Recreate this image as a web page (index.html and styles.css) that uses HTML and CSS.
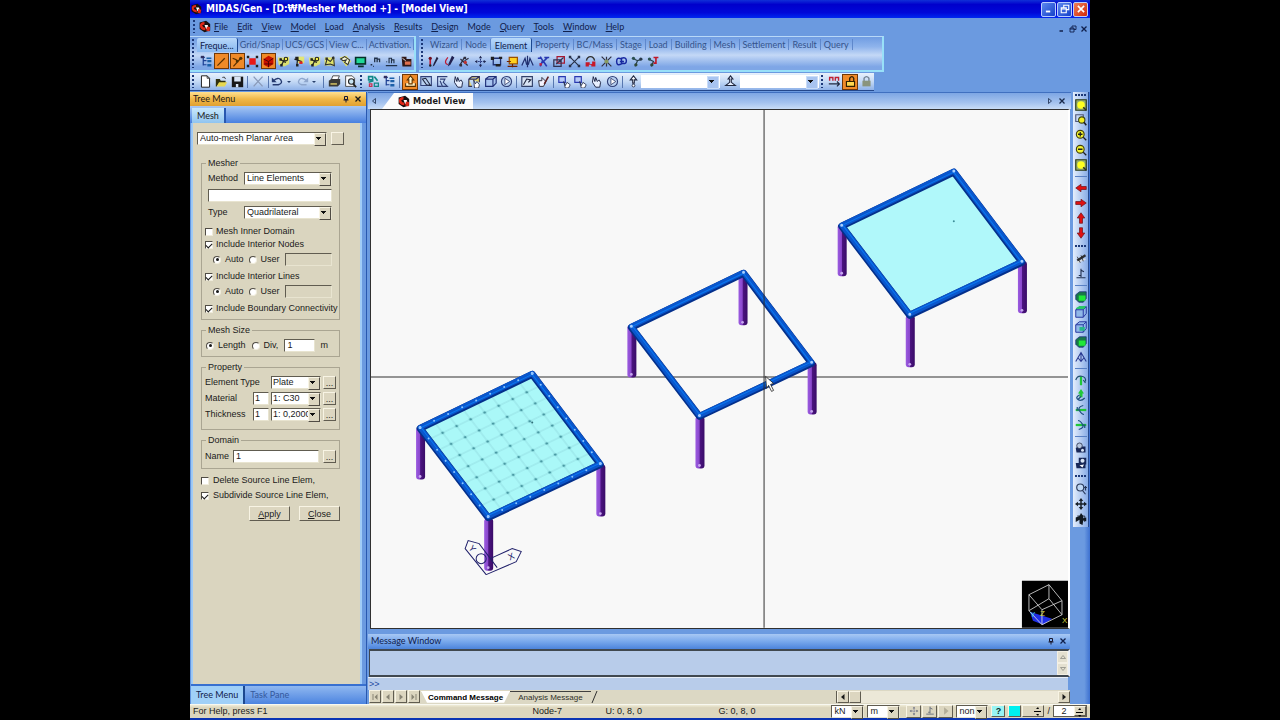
FILE: index.html
```html
<!DOCTYPE html>
<html lang="en">
<head>
<meta charset="utf-8">
<title>MIDAS/Gen - Model View</title>
<link rel="stylesheet" href="styles.css">
</head>
<body>
<svg class="sprite" aria-hidden="true">
  <defs>
    <symbol id="logo" viewBox="0 0 16 16"><path fill="#181010" d="M2 3 10 1l5 4v8l-7 2-6-4z"/><path fill="none" stroke="#e02818" stroke-width="3" d="M8 4Q3 4 4 8q1 3 5 3"/><path fill="#fff" d="M8 6h4l1 4-3 1z"/><path fill="#e02818" d="m11 8 4 1-1 5-4-1z"/></symbol>
    <symbol id="tree" viewBox="0 0 16 16"><path fill="none" stroke="#1c3f94" stroke-width="1.5" d="M1 3h5M4 3v10M4 7h4M4 12h4"/><path fill="#1c60a8" d="M8 3h6v2H8zM9 6h5v3H9zM9 11h5v3H9z"/><path fill="#303060" d="M1 1h4v3H1z"/></symbol>
    <symbol id="line" viewBox="0 0 16 16"><path stroke="#5a3000" stroke-width="1.5" d="m3 13 9-9"/></symbol>
    <symbol id="line2" viewBox="0 0 16 16"><path stroke="#5a3000" stroke-width="1.5" d="m3 14 9-10M2 4l5 2"/><circle cx="12" cy="4" r="2" fill="#503000"/><path fill="#503000" d="M6 6h3v3H6z"/></symbol>
    <symbol id="redbox" viewBox="0 0 16 16"><path fill="#e81818" d="M4 4h8v8H4z"/><path fill="#202020" d="M1 1h3v3H1zM12 1h3v3h-3zM1 12h3v3H1zM12 12h3v3h-3z"/></symbol>
    <symbol id="redcube" viewBox="0 0 16 16"><path fill="#c81000" d="m2 5 6-4 6 3v7l-6 4-6-3z"/><path stroke="#400" fill="none" d="m2 5 6 3 6-4M8 8v7M3 11h10"/></symbol>
    <symbol id="node" viewBox="0 0 16 16"><path fill="#f3ee48" d="M1 3h7l7-1v9l-6 3-7-2z" opacity=".75"/><path stroke="#202020" stroke-width="1.5" fill="none" d="m4 5 4 3 3 1M8 8l-3 5M8 8l2-4"/><circle cx="11" cy="5" r="2.2" fill="#f3ee48" stroke="#202020" stroke-width="1.3"/><path fill="#202020" d="M3 4h3v3H3zM4 11h3v3H4z"/></symbol>
    <symbol id="node2" viewBox="0 0 16 16"><path fill="#f3ee48" d="M7 2h8v8H7z" opacity=".75"/><path stroke="#202020" stroke-width="1.5" fill="none" d="m3 5 9 3M7 3l-1 10"/><path fill="#e02020" d="M9 8h4v3H9z"/><path fill="#202020" d="M4 2h4v4H4zM5 11h3v3H5z"/></symbol>
    <symbol id="poly" viewBox="0 0 16 16"><path fill="#f3ee48" d="M2 3h12v10H2z" opacity=".8"/><path stroke="#303030" stroke-width="1.3" fill="none" d="m3 12 2-7 4 3 4-5 1 10-5-2z"/><path fill="#303030" d="M3 3h3v3H3zM11 2h3v3h-3z"/></symbol>
    <symbol id="hand" viewBox="0 0 16 16"><path fill="#f3ee48" d="M1 3 9 1l6 7-6 6z" opacity=".85"/><path stroke="#303030" fill="#f5f5d0" stroke-width="1.3" d="m2 5 5-3 6 4-2 6-4-3 2-3-4 1z"/></symbol>
    <symbol id="screen" viewBox="0 0 16 16"><path fill="#063028" d="M1 2h14v10H1zM5 13h7v2H5z"/><path fill="#20d898" d="M3 4h10v6H3z"/></symbol>
    <symbol id="num" viewBox="0 0 16 16"><path fill="none" stroke="#203048" stroke-width="1.6" d="M7 9V4h3v5M10 5h3v4M2 12h2M5 14h1"/></symbol>
    <symbol id="num2" viewBox="0 0 16 16"><path fill="none" stroke="#203048" stroke-width="1.4" d="M5 10V4h3v6M8 6h3v4M1 13h14M2 8v1"/></symbol>
    <symbol id="case" viewBox="0 0 16 16"><path fill="#301818" d="M2 2h6v3h6v9H3z"/><path fill="#e07050" d="M6 8h7v4H6z"/><path stroke="#fff" d="m3 4 4 3"/></symbol>
    <symbol id="pen" viewBox="0 0 16 16"><path stroke="#c01830" stroke-width="2" d="M4 3v9"/><path fill="#202040" d="M12 2 14 4 9 13l-2 1 1-3z"/><circle cx="4" cy="4" r="2" fill="#701020"/><circle cx="4" cy="13" r="1.5" fill="#202020"/></symbol>
    <symbol id="pencurve" viewBox="0 0 16 16"><path fill="none" stroke="#c01830" stroke-width="1.5" d="M6 3q-6 7 0 9"/><path fill="#202050" d="m11 1 3 2-5 9-3 2 1-4z"/></symbol>
    <symbol id="pens" viewBox="0 0 16 16"><path stroke="#303040" stroke-width="1.5" fill="none" d="m2 13 6-10M3 5l9 8M8 7l5-3"/><circle cx="9" cy="9" r="2" fill="#c03030"/><path fill="#303040" d="M2 11h3v3H2zM7 2h3v3H7z"/></symbol>
    <symbol id="mover" viewBox="0 0 16 16"><path stroke="#2a3a80" stroke-width="1.3" stroke-dasharray="2 1" fill="none" d="M8 2v12M2 8h12"/><path fill="#202850" d="m8 1 2 3H6zM8 15l2-3H6zM1 8l3-2v4zM15 8l-3-2v4z"/></symbol>
    <symbol id="copyel" viewBox="0 0 16 16"><path fill="none" stroke="#203070" stroke-width="1.6" d="M3 4h10M4 4v8h9V4"/><path fill="#202020" d="M1 2h4v4H1zM11 2h4v3h-4zM7 11h6v3H7z"/></symbol>
    <symbol id="yellowrect" viewBox="0 0 16 16"><path fill="#ffd020" stroke="#9a5000" stroke-width="1.5" d="M4 3h10v8H4z"/><path stroke="#702000" stroke-width="1.5" d="M1 8h5M8 11v4M2 14h12"/></symbol>
    <symbol id="mirror" viewBox="0 0 16 16"><path fill="none" stroke="#203070" stroke-width="1.5" d="m1 13 4-9 2 8M15 13l-4-9-2 8M8 1v14"/></symbol>
    <symbol id="divide" viewBox="0 0 16 16"><path fill="none" stroke="#2838b0" stroke-width="2" d="M1 4h4M9 3h6M4 2l3 5-3 7M13 3l-5 5 4 6"/><path fill="#c02040" d="M3 10h3v3H3z"/></symbol>
    <symbol id="merge" viewBox="0 0 16 16"><path fill="none" stroke="#a81830" stroke-width="1.5" d="M5 2h9v8H5z"/><path fill="none" stroke="#303050" stroke-width="1.5" d="M1 6h9v8H1zM4 11l9-8"/></symbol>
    <symbol id="cross" viewBox="0 0 16 16"><path stroke="#283048" stroke-width="1.4" d="m2 2 12 12M14 2 2 14"/><path fill="#283048" d="M1 1h3v3H1zM12 1h3v3h-3zM1 12h3v3H1zM12 12h3v3h-3z"/></symbol>
    <symbol id="rotate" viewBox="0 0 16 16"><path fill="none" stroke="#303030" stroke-width="1.7" d="M3 7q1-5 5-5t5 5"/><path fill="#c81828" d="M2 9h5v2h3V8h4v6H9v-2H6v2H2z"/></symbol>
    <symbol id="burst" viewBox="0 0 16 16"><path stroke="#303040" stroke-width="1.5" d="m2 2 12 12M14 2 2 14M8 2v12"/><circle cx="8" cy="8" r="2.5" fill="#889a60"/></symbol>
    <symbol id="loops" viewBox="0 0 16 16"><path fill="none" stroke="#1828a0" stroke-width="1.8" d="M8 5Q2 2 2 8t6 3V4q6-2 6 3t-6 3M6 8h5"/></symbol>
    <symbol id="nodes3" viewBox="0 0 16 16"><path fill="none" stroke="#28404a" stroke-width="1.5" d="m2 4 6 3 6-2M8 7l-3 7"/><circle cx="3" cy="4" r="2" fill="#2a5050"/><circle cx="12" cy="5" r="2" fill="#28384a"/><circle cx="6" cy="12" r="2" fill="#304838"/></symbol>
    <symbol id="nodes4" viewBox="0 0 16 16"><path fill="none" stroke="#28404a" stroke-width="1.5" d="m2 5 6 3-3 6"/><path fill="none" stroke="#c01828" stroke-width="2" d="M8 3h6M11 3v7H8"/><circle cx="3" cy="5" r="2" fill="#2a5050"/><circle cx="6" cy="12" r="2" fill="#304838"/></symbol>
    <symbol id="new" viewBox="0 0 16 16"><path fill="#fff" stroke="#202020" stroke-width="1.2" d="M3 1h7l3 3v11H3z"/><path fill="none" stroke="#202020" d="M10 1v3h3"/></symbol>
    <symbol id="open" viewBox="0 0 16 16"><path fill="#303010" d="M1 5h5l1 2h6v3H5l-3 4H1z"/><path fill="#e8d850" d="M5 9h10l-3 5H2z"/><path fill="none" stroke="#202020" d="M9 3q3-2 4 2"/></symbol>
    <symbol id="save" viewBox="0 0 16 16"><path fill="#181818" d="M1 2h14v13H1z"/><path fill="#d8e4f4" d="M4 2h8v6H4zM6 11h3v4H6z"/></symbol>
    <symbol id="cut" viewBox="0 0 16 16"><path stroke="#8a9ab8" stroke-width="1.6" d="m2 2 11 12M13 2 2 14"/></symbol>
    <symbol id="undo" viewBox="0 0 16 16"><path fill="none" stroke="#253a70" stroke-width="1.7" d="M3 7q6-5 9-1t-3 6H2"/><path fill="#253a70" d="M1 3v6h6z"/></symbol>
    <symbol id="redo" viewBox="0 0 16 16"><path fill="none" stroke="#8ea6cc" stroke-width="1.7" d="M13 7Q7 2 4 6t3 6h6"/><path fill="#8ea6cc" d="M15 3v6H9z"/></symbol>
    <symbol id="print" viewBox="0 0 16 16"><path fill="#fff" stroke="#303030" d="m4 6 2-5h8l-2 5z"/><path fill="#3a3a38" d="m1 7 3-2h11v6l-3 3H1z"/><path fill="#c8b860" d="M3 10h8v2H3z"/></symbol>
    <symbol id="preview" viewBox="0 0 16 16"><path fill="#fff" stroke="#303030" d="M2 1h8l3 3v10H2z"/><circle cx="9" cy="8" r="3.4" fill="#c8e4f4" stroke="#202020" stroke-width="1.4"/><path stroke="#202020" stroke-width="2" d="m11 11 4 4"/></symbol>
    <symbol id="works" viewBox="0 0 16 16"><path fill="none" stroke="#108888" stroke-width="2" d="M2 2h5v4H2zM9 2l4 5M2 9l6-2"/><path fill="none" stroke="#c83050" stroke-width="1.5" d="M3 11h3v3H3z"/><path fill="none" stroke="#108888" stroke-width="1.5" d="M9 10h5v4H9z"/></symbol>
    <symbol id="sel" viewBox="0 0 16 16"><path fill="#fff4c8" stroke="#583000" stroke-width="1.3" d="m8 1 4 5h-2v5H6V6H4zM2 10v4h12v-4"/></symbol>
    <symbol id="winsel" viewBox="0 0 16 16"><path fill="#b8d0f0" stroke="#304078" stroke-width="1.3" d="M1 2h13v11H1z"/><path fill="none" stroke="#202840" stroke-width="1.3" d="m3 5 4-1 6 9-5-1z"/></symbol>
    <symbol id="polysel" viewBox="0 0 16 16"><path fill="none" stroke="#304078" stroke-width="1.4" d="M14 2H2v12h5M5 5h6l-2 4 5 5H8L5 7"/></symbol>
    <symbol id="point" viewBox="0 0 16 16"><path fill="#e8f0ff" stroke="#202848" stroke-width="1.2" d="m4 2 2 6 1-5 2 5 2-2 2 3-1 6H7L3 9z"/></symbol>
    <symbol id="cube" viewBox="0 0 16 16"><path fill="#a8c4f0" stroke="#203078" stroke-width="1.4" d="m2 5 4-3h9v8l-4 4H2zM2 5h9l4-3M11 5v9"/></symbol>
    <symbol id="cubehand" viewBox="0 0 16 16"><path fill="#e8d870" stroke="#303058" stroke-width="1.4" d="m1 5 4-3h9v7M1 5h9l4-3M1 5v9h4"/><path fill="#fff" stroke="#202848" d="m7 6 2 5 2-3 3 4-1 4H8z"/></symbol>
    <symbol id="circ" viewBox="0 0 16 16"><circle cx="8" cy="8" r="6.2" fill="#b8d0f0" stroke="#304078" stroke-width="1.4"/><path fill="#fff" stroke="#303a68" d="M6 4v8l6-4z"/></symbol>
    <symbol id="frame" viewBox="0 0 16 16"><path fill="#d8e4f4" stroke="#304068" stroke-width="1.4" d="M1 2h13v12H1z"/><path fill="none" stroke="#202840" stroke-width="1.4" d="m3 12 4-7 5 1-3 3"/></symbol>
    <symbol id="handpen" viewBox="0 0 16 16"><path fill="#f4f4ff" stroke="#303040" stroke-width="1.2" d="M2 7h4V3l5 5-3 6H3z"/><path stroke="#602020" stroke-width="2" d="m9 11 5-9"/></symbol>
    <symbol id="boxhand" viewBox="0 0 16 16"><path fill="#b8ccf8" stroke="#2838b0" stroke-width="1.4" d="M1 2h8v7H1z"/><path fill="#fff" stroke="#202848" d="m7 8 2 5 2-4 4 3-2 4H9z"/></symbol>
    <symbol id="up" viewBox="0 0 16 16"><path fill="#fff" stroke="#202840" stroke-width="1.3" d="m8 1 4 5H9v4H7V6H4z"/><circle cx="8" cy="13" r="1.7" fill="#fff" stroke="#202840"/></symbol>
    <symbol id="upset" viewBox="0 0 16 16"><path fill="#e8f0ff" stroke="#202840" stroke-width="1.3" d="m8 1 3 4H9v4l5 4H2l5-4V5H5z"/></symbol>
    <symbol id="heart" viewBox="0 0 16 16"><path fill="none" stroke="#c02030" stroke-width="1.7" d="M2 7V3h4v4M9 7V3h4v4"/><path fill="none" stroke="#202840" stroke-width="1.5" d="M1 11h12M11 8l3 3-3 3"/></symbol>
    <symbol id="unlock" viewBox="0 0 16 16"><path fill="none" stroke="#302000" stroke-width="1.6" d="M7 8V4q3-4 5 0v4"/><path fill="#ffd850" stroke="#302000" stroke-width="1.4" d="M3 8h10v6H3z"/></symbol>
    <symbol id="lock" viewBox="0 0 16 16"><path fill="none" stroke="#708090" stroke-width="1.6" d="M5 8V4q3-4 6 0v4"/><path fill="#8a947c" d="M3 7h10v7H3z"/></symbol>
    <symbol id="zfit" viewBox="0 0 16 16"><path fill="#98b070" stroke="#283818" stroke-width="1.5" d="M1 1h14v14H1z"/><circle cx="8" cy="8" r="5" fill="#ffff20"/><path stroke="#303020" stroke-width="2" d="m11 11 4 4"/></symbol>
    <symbol id="zwin" viewBox="0 0 16 16"><path fill="none" stroke="#505878" stroke-width="1.5" d="M1 1h10v9H1z"/><circle cx="9" cy="8" r="4.2" fill="#f4f020" stroke="#404818" stroke-width="1.5"/><path stroke="#202020" stroke-width="2" d="m12 11 3 4"/></symbol>
    <symbol id="zin" viewBox="0 0 16 16"><circle cx="7" cy="7" r="5.2" fill="#f4f430" stroke="#404010" stroke-width="1.5"/><path stroke="#202020" stroke-width="1.7" d="M4 7h6M7 4v6M11 11l4 4"/></symbol>
    <symbol id="zout" viewBox="0 0 16 16"><circle cx="7" cy="7" r="5.2" fill="#f4f430" stroke="#404010" stroke-width="1.5"/><path stroke="#202020" stroke-width="1.7" d="M4 7h6M11 11l4 4"/></symbol>
    <symbol id="arrow" viewBox="0 0 16 16"><path fill="#e01010" stroke="#701820" d="m1 8 7-5v3h7v4H8v3z"/></symbol>
    <symbol id="brush" viewBox="0 0 16 16"><path stroke="#303030" stroke-width="3" d="M3 10 14 3"/><path stroke="#d8dce0" stroke-width="2" d="m2 13 12-5"/><path stroke="#202020" d="m3 5 4 8M8 3l3 8"/></symbol>
    <symbol id="perp" viewBox="0 0 16 16"><path fill="none" stroke="#203050" stroke-width="1.5" d="M8 1v11M2 13h12M8 3l4 2M5 10h3"/></symbol>
    <symbol id="gcube" viewBox="0 0 16 16"><path fill="#187848" stroke="#203080" d="m1 5 5-4h9v9l-4 5H5L1 11z"/><path fill="#20e838" d="M5 6h9v7H5z"/></symbol>
    <symbol id="gcube2" viewBox="0 0 16 16"><path fill="#90b8e8" stroke="#2838a0" stroke-width="1.3" d="m1 5 5-4h9v9l-4 5H1zM1 5h10v10M11 5l4-4"/><path fill="#28c868" d="M1 3 6 0h9l-3 4H2z"/></symbol>
    <symbol id="gcube3" viewBox="0 0 16 16"><path fill="#90b8e8" stroke="#2838a0" stroke-width="1.3" d="m1 5 5-4h9v9l-4 5H1zM1 5h10v10M11 5l4-4"/><path fill="#28b888" d="M6 8h7v5H6z"/></symbol>
    <symbol id="axes" viewBox="0 0 16 16"><path fill="none" stroke="#283890" stroke-width="1.4" d="m1 14 7-12 7 12M4 9l4 5 4-5M8 2v12"/></symbol>
    <symbol id="rot1" viewBox="0 0 16 16"><path stroke="#20c838" stroke-width="3" d="M8 3v12"/><path fill="none" stroke="#205070" stroke-width="1.6" d="M1 8q2-6 8-5t5 7M11 8l3 4"/></symbol>
    <symbol id="rot2" viewBox="0 0 16 16"><path fill="#20c838" d="m8 0 4 6h-2v5H6V6H4z"/><path fill="none" stroke="#205080" stroke-width="1.6" d="M6 8q-6 3-2 6t9-2M8 10l-4 4"/></symbol>
    <symbol id="rot3" viewBox="0 0 16 16"><path stroke="#20c838" stroke-width="3" d="M1 8h14"/><path fill="none" stroke="#205080" stroke-width="1.6" d="M11 2Q3 4 6 9t6 5M3 4v4h4"/></symbol>
    <symbol id="cam" viewBox="0 0 16 16"><path fill="#182858" d="M1 8 4 6h10v8H2z"/><circle cx="6" cy="5" r="3.7" fill="#b8c8e0" stroke="#202840"/><circle cx="10" cy="11" r="2" fill="#d8e4f4"/></symbol>
    <symbol id="cam2" viewBox="0 0 16 16"><path fill="#182858" d="M1 8h13v7H2zM5 1h10v9H5z"/><circle cx="10" cy="5" r="2.7" fill="#d8e4f4"/><path fill="#fff" d="m6 11 6-1-2 4z"/></symbol>
    <symbol id="mag" viewBox="0 0 16 16"><circle cx="7" cy="6" r="4.7" fill="#c0d8f4" stroke="#283858" stroke-width="1.5"/><path stroke="#283858" stroke-width="1.6" d="m10 10 4 5M14 4v6M12 6h4"/></symbol>
    <symbol id="pan" viewBox="0 0 16 16"><path stroke="#182028" stroke-width="2" d="M8 2v12M2 8h12"/><path fill="#182028" d="m8 0 3 4H5zM8 16l3-4H5zM0 8l4-3v6zM16 8l-4-3v6z"/></symbol>
    <symbol id="orbit" viewBox="0 0 16 16"><path fill="#101820" d="m8 0 3 4v3l4-1v5l-4-1-1 6-4-2V9L1 12V6l5-2z"/><path fill="none" stroke="#101820" d="M3 4h10v8"/></symbol>
    <symbol id="pin" viewBox="0 0 16 16"><path fill="none" stroke="#181830" stroke-width="2" d="M5 3h6v6H5zM3 10h10M8 10v5"/></symbol>
    <symbol id="x" viewBox="0 0 16 16"><path stroke="currentColor" stroke-width="2.6" d="m3 3 10 10M13 3 3 13"/></symbol>
    <symbol id="min" viewBox="0 0 16 16"><path stroke="currentColor" stroke-width="3" d="M3 12h7"/></symbol>
    <symbol id="restore" viewBox="0 0 16 16"><path fill="none" stroke="currentColor" stroke-width="1.8" d="M6 6V2h8v7h-4M2 6h8v8H2zM2 8h8"/></symbol>
    <symbol id="tri" viewBox="0 0 16 16"><path fill="currentColor" d="M5 2v12l7-6z"/></symbol>
    <symbol id="triopen" viewBox="0 0 16 16"><path fill="none" stroke="currentColor" stroke-width="1.6" d="M5 3v10l6-5z"/></symbol>
    <symbol id="triend" viewBox="0 0 16 16"><path fill="currentColor" d="M3 2v12l6-6zM11 2h2v12h-2z"/></symbol>
    <linearGradient id="purple"><stop offset="0" stop-color="#9b5be0"/><stop offset=".42" stop-color="#8a48cc"/><stop offset=".5" stop-color="#4b1480"/><stop offset="1" stop-color="#3a0c68"/></linearGradient>
    <pattern id="mesh" width="10" height="10" patternUnits="userSpaceOnUse" patternTransform="matrix(1.4 -.675 .85 1.11 421 428)"><path fill="none" stroke="#86d0d6" stroke-width=".4" d="M0 0h10M0 0v10M10 0v10M0 10h10"/><path fill="#4a9aa4" d="M0 0h.8v.8H0zM9.200 0h.8v.8h-.8zM0 9.200h.8v.8H0zM9.200 9.200h.8v.8h-.8z"/></pattern>
    <rect id="leg" width="9" height="52" rx="3" fill="url(#purple)"/>
    <g id="beams" fill="none" stroke-linejoin="round">
      <path stroke="#04308c" stroke-width="7" d="m421 428 112-54 68 90-112 53z"/>
      <path stroke="#0a56cc" stroke-width="5" d="m421 427 112-54 68 90-112 53z"/>
      <path stroke="#0a78f0" stroke-width="1" d="m422 427 111-53 67 89-111 52z"/>
      <path stroke="#a8d0ff" stroke-width="3" stroke-linecap="round" d="M421 427h0M533 373h0M601 463h0M489 516h0"/>
    </g>
    <g id="legs"><use href="#leg" x="417" y="427"/><use href="#leg" x="485" y="518"/><use href="#leg" x="597" y="464"/><g fill="#c8a8f0"><circle cx="421" cy="476" r="1.4"/><circle cx="489" cy="567" r="1.4"/><circle cx="601" cy="513" r="1.4"/></g></g>
  </defs>
</svg>

<div class="app">
  <header class="title">
    <svg class="ic"><use href="#logo"/></svg>
    <h1>MIDAS/Gen - [D:₩Mesher Method +] - [Model View]</h1>
    <div class="winbtns">
      <button aria-label="Minimize"><svg class="ic"><use href="#min"/></svg></button>
      <button aria-label="Restore"><svg class="ic"><use href="#restore"/></svg></button>
      <button class="close" aria-label="Close window"><svg class="ic"><use href="#x"/></svg></button>
    </div>
  </header>

  <nav class="menu">
    <i class="grip"></i><svg class="ic"><use href="#logo"/></svg>
    <button><u>F</u>ile</button><button><u>E</u>dit</button><button><u>V</u>iew</button><button><u>M</u>odel</button><button><u>L</u>oad</button><button><u>A</u>nalysis</button><button><u>R</u>esults</button><button><u>D</u>esign</button><button>M<u>o</u>de</button><button><u>Q</u>uery</button><button><u>T</u>ools</button><button><u>W</u>indow</button><button><u>H</u>elp</button>
    <div class="mdi">
      <button aria-label="Minimize view"><svg><use href="#min"/></svg></button>
      <button aria-label="Restore view"><svg><use href="#restore"/></svg></button>
      <button aria-label="Close view"><svg><use href="#x"/></svg></button>
    </div>
  </nav>

  <div class="ribbons">
    <section class="ribbon ribbon-a">
      <i class="grip"></i>
      <div class="rtabs"><button class="on">Freque...</button><button>Grid/Snap</button><button>UCS/GCS</button><button>View C...</button><button>Activation.</button></div>
      <div class="rtools">
        <button class="t" aria-label="Works tree"><svg class="ic"><use href="#tree"/></svg></button>
        <button class="t hot" aria-label="Line"><svg class="ic"><use href="#line"/></svg></button>
        <button class="t hot" aria-label="Line nodes"><svg class="ic"><use href="#line2"/></svg></button>
        <button class="t" aria-label="Shrink"><svg class="ic"><use href="#redbox"/></svg></button>
        <button class="t hot" aria-label="Hidden"><svg class="ic"><use href="#redcube"/></svg></button>
        <button class="t" aria-label="Node snap"><svg class="ic"><use href="#node"/></svg></button>
        <button class="t" aria-label="Element snap"><svg class="ic"><use href="#node2"/></svg></button>
        <button class="t" aria-label="Activate"><svg class="ic"><use href="#node"/></svg></button>
        <button class="t" aria-label="Inverse"><svg class="ic"><use href="#poly"/></svg></button>
        <button class="t" aria-label="Activate all"><svg class="ic"><use href="#hand"/></svg></button>
        <button class="t" aria-label="Display"><svg class="ic"><use href="#screen"/></svg></button>
        <button class="t" aria-label="Node number"><svg class="ic"><use href="#num"/></svg></button>
        <button class="t" aria-label="Element number"><svg class="ic"><use href="#num2"/></svg></button>
        <button class="t" aria-label="Display option"><svg class="ic"><use href="#case"/></svg></button>
      </div>
    </section>
    <section class="ribbon ribbon-b">
      <i class="grip"></i>
      <div class="rtabs"><button>Wizard</button><button>Node</button><button class="on">Element</button><button>Property</button><button>BC/Mass</button><button>Stage</button><button>Load</button><button>Building</button><button>Mesh</button><button>Settlement</button><button>Result</button><button>Query</button></div>
      <div class="rtools">
        <button class="t" aria-label="Create"><svg class="ic"><use href="#pen"/></svg></button>
        <button class="t" aria-label="Create on curve"><svg class="ic"><use href="#pencurve"/></svg></button>
        <button class="t" aria-label="Delete"><svg class="ic"><use href="#pens"/></svg></button>
        <button class="t" aria-label="Translate"><svg class="ic"><use href="#mover"/></svg></button>
        <button class="t" aria-label="Extrude"><svg class="ic"><use href="#copyel"/></svg></button>
        <button class="t" aria-label="Rotate"><svg class="ic"><use href="#yellowrect"/></svg></button>
        <button class="t" aria-label="Mirror"><svg class="ic"><use href="#mirror"/></svg></button>
        <button class="t" aria-label="Divide"><svg class="ic"><use href="#divide"/></svg></button>
        <button class="t" aria-label="Merge"><svg class="ic"><use href="#merge"/></svg></button>
        <button class="t" aria-label="Intersect"><svg class="ic"><use href="#cross"/></svg></button>
        <button class="t" aria-label="Parameters"><svg class="ic"><use href="#rotate"/></svg></button>
        <button class="t" aria-label="Explode"><svg class="ic"><use href="#burst"/></svg></button>
        <button class="t" aria-label="Renumber"><svg class="ic"><use href="#loops"/></svg></button>
        <button class="t" aria-label="Compact"><svg class="ic"><use href="#nodes3"/></svg></button>
        <button class="t" aria-label="Local axis"><svg class="ic"><use href="#nodes4"/></svg></button>
      </div>
    </section>
  </div>

  <div class="toolbar">
    <i class="grip"></i>
    <button class="t" aria-label="New"><svg class="ic"><use href="#new"/></svg></button>
    <button class="t" aria-label="Open"><svg class="ic"><use href="#open"/></svg></button>
    <button class="t" aria-label="Save"><svg class="ic"><use href="#save"/></svg></button>
    <i class="sep"></i>
    <button class="t" aria-label="Cut"><svg class="ic"><use href="#cut"/></svg></button>
    <i class="sep"></i>
    <button class="t drop" aria-label="Undo"><svg class="ic"><use href="#undo"/></svg></button>
    <button class="t drop" aria-label="Redo"><svg class="ic"><use href="#redo"/></svg></button>
    <i class="sep"></i>
    <button class="t" aria-label="Print"><svg class="ic"><use href="#print"/></svg></button>
    <button class="t" aria-label="Preview"><svg class="ic"><use href="#preview"/></svg></button>
    <i class="grip"></i>
    <button class="t" aria-label="Group"><svg class="ic"><use href="#works"/></svg></button>
    <button class="t" aria-label="Tree"><svg class="ic"><use href="#tree"/></svg></button>
    <i class="sep"></i>
    <button class="t hot" aria-label="Select single"><svg class="ic"><use href="#sel"/></svg></button>
    <button class="t" aria-label="Select window"><svg class="ic"><use href="#winsel"/></svg></button>
    <button class="t" aria-label="Select polygon"><svg class="ic"><use href="#polysel"/></svg></button>
    <button class="t" aria-label="Select intersect"><svg class="ic"><use href="#point"/></svg></button>
    <button class="t" aria-label="Select plane"><svg class="ic"><use href="#cubehand"/></svg></button>
    <button class="t" aria-label="Select volume"><svg class="ic"><use href="#cube"/></svg></button>
    <button class="t" aria-label="Select all"><svg class="ic"><use href="#circ"/></svg></button>
    <i class="sep"></i>
    <button class="t" aria-label="Select previous"><svg class="ic"><use href="#frame"/></svg></button>
    <button class="t" aria-label="Select recent"><svg class="ic"><use href="#handpen"/></svg></button>
    <i class="sep"></i>
    <button class="t" aria-label="Unselect window"><svg class="ic"><use href="#boxhand"/></svg></button>
    <button class="t" aria-label="Unselect polygon"><svg class="ic"><use href="#boxhand"/></svg></button>
    <button class="t" aria-label="Unselect intersect"><svg class="ic"><use href="#point"/></svg></button>
    <button class="t" aria-label="Unselect all"><svg class="ic"><use href="#circ"/></svg></button>
    <i class="sep"></i>
    <button class="t" aria-label="Node selection"><svg class="ic"><use href="#up"/></svg></button>
    <span class="combo flat"><select aria-label="Node list"><option></option></select></span>
    <button class="t wide" aria-label="Element selection"><svg class="ic"><use href="#upset"/></svg></button>
    <span class="combo flat"><select aria-label="Element list"><option></option></select></span>
    <i class="grip"></i>
    <button class="t" aria-label="Dynamic"><svg class="ic"><use href="#heart"/></svg></button>
    <button class="t hot" aria-label="Unlock"><svg class="ic"><use href="#unlock"/></svg></button>
    <button class="t" aria-label="Lock"><svg class="ic"><use href="#lock"/></svg></button>
  </div>

  <main>
    <aside class="dock">
      <div class="dockhead"><h2>Tree Menu</h2><button aria-label="Pin"><svg><use href="#pin"/></svg></button><button aria-label="Close panel"><svg><use href="#x"/></svg></button></div>
      <div class="docktabs"><button>Mesh</button></div>
      <form class="panel">
        <div class="row top"><span class="combo"><select aria-label="Function"><option>Auto-mesh Planar Area</option></select></span><button type="button" class="btn blank" aria-label="More"></button></div>
        <fieldset>
          <legend>Mesher</legend>
          <div class="fields">
            <label for="method">Method</label><span class="combo"><select id="method"><option>Line Elements</option></select></span>
            <input class="span" type="text" aria-label="Elements">
            <label for="type">Type</label><span class="combo"><select id="type"><option>Quadrilateral</option></select></span>
          </div>
          <label class="chk"><input type="checkbox">Mesh Inner Domain</label>
          <label class="chk"><input type="checkbox" checked>Include Interior Nodes</label>
          <div class="row radios"><label><input type="radio" name="n" checked>Auto</label><label><input type="radio" name="n">User</label><input type="text" disabled aria-label="Node size"></div>
          <label class="chk"><input type="checkbox" checked>Include Interior Lines</label>
          <div class="row radios"><label><input type="radio" name="l" checked>Auto</label><label><input type="radio" name="l">User</label><input type="text" disabled aria-label="Line size"></div>
          <label class="chk"><input type="checkbox" checked>Include Boundary Connectivity</label>
        </fieldset>
        <fieldset>
          <legend>Mesh Size</legend>
          <div class="row size"><label><input type="radio" name="s" checked>Length</label><label><input type="radio" name="s">Div,</label><input type="text" value="1" aria-label="Mesh size"><span>m</span></div>
        </fieldset>
        <fieldset>
          <legend>Property</legend>
          <div class="props">
            <label for="etype" class="two">Element Type</label><span class="combo"><select id="etype"><option>Plate</option></select></span><button type="button" class="btn" aria-label="Element types">...</button>
            <label for="mat">Material</label><input id="mat" type="text" value="1"><span class="combo"><select aria-label="Material name"><option>1: C30</option></select></span><button type="button" class="btn" aria-label="Materials">...</button>
            <label for="thk">Thickness</label><input id="thk" type="text" value="1"><span class="combo"><select aria-label="Thickness value"><option>1: 0,2000</option></select></span><button type="button" class="btn" aria-label="Thicknesses">...</button>
          </div>
        </fieldset>
        <fieldset>
          <legend>Domain</legend>
          <div class="row name"><label for="dom">Name</label><input id="dom" type="text" value="1"><button type="button" class="btn" aria-label="Domains">...</button></div>
        </fieldset>
        <div class="foot">
          <label class="chk"><input type="checkbox">Delete Source Line Elem,</label>
          <label class="chk"><input type="checkbox" checked>Subdivide Source Line Elem,</label>
        </div>
        <div class="actions"><button type="button" class="btn"><u>A</u>pply</button><button type="button" class="btn"><u>C</u>lose</button></div>
      </form>
      <div class="bottomtabs"><button class="on">Tree Menu</button><button>Task Pane</button></div>
    </aside>

    <section class="center">
      <div class="doctabs">
        <button class="nav" aria-label="Previous tab"><svg class="flip"><use href="#triopen"/></svg></button>
        <button class="doctab"><svg class="ic"><use href="#logo"/></svg>Model View</button>
        <button class="nav" aria-label="Next tab"><svg><use href="#triopen"/></svg></button>
        <button class="nav" aria-label="Close tab"><svg><use href="#x"/></svg></button>
      </div>
      <div class="canvas">
        <svg viewBox="372 110 696 517" role="img" aria-label="Model view">
          <path fill="none" stroke="#303030" d="M372 376.500h696"/>
          <use href="#legs" x="421" y="-203"/>
          <path fill="#b0f8fa" d="m842 224 112-54 68 90-113 53z"/>
          <use href="#beams" x="421" y="-202"/>
          <circle cx="954" cy="221" r="1" fill="#3e8e98"/>
          <use href="#leg" x="739" y="273"/><circle cx="743" cy="322" r="1.400" fill="#c8a8f0"/>
          <use href="#legs" x="211" y="-102"/>
          <use href="#beams" x="211" y="-101"/>
          <use href="#legs"/>
          <path fill="#aaf8f8" d="m421 427 112-54 68 90-112 53z"/>
          <path fill="url(#mesh)" d="m421 428 112-54 68 90-112 53z"/>
          <use href="#beams"/>
          <path fill="none" stroke="#8cc4ff" stroke-width="2" stroke-linecap="round" stroke-dasharray="0 15.540" d="m421 427 112-54"/>
          <path fill="none" stroke="#8cc4ff" stroke-width="2" stroke-linecap="round" stroke-dasharray="0 14.100" d="m533 373 68 90"/>
          <path fill="none" stroke="#8cc4ff" stroke-width="2" stroke-linecap="round" stroke-dasharray="0 15.490" d="m601 463-112 53"/>
          <path fill="none" stroke="#8cc4ff" stroke-width="2" stroke-linecap="round" stroke-dasharray="0 14" d="m489 516-68-89"/>
          <circle cx="533" cy="422" r="1" fill="#2e6e78"/>
          <g fill="none" stroke="#20206a"><path d="m487 574-21-26 3-8 11 3 18 24M487 574l30-13 5-10-9-3-22 10"/><circle cx="482" cy="558" r="5"/></g>
          <g class="axis"><text x="509" y="559" transform="rotate(-25 512 556)">X</text><text x="470" y="551" transform="rotate(50 473 548)">Y</text></g>
          <path stroke="#303030" d="M764.500 110v517"/>
          <path fill="#fff" stroke="#202020" stroke-width=".8" d="m766 376 1 12 2-3 3 6 2-1-3-6 3-1z"/>
          <path d="M1022 580h46v47h-46z"/>
          <path fill="#2030e8" d="m1030 611 22 7-9 6-10-4z"/>
          <g fill="none" stroke="#e4e4e4" stroke-width=".8"><path d="m1029 594 20-10 13 16v14l-20 10-13-14zM1029 594l13 15 20-9M1042 609v15M1049 584v14l13 16M1029 610l20-12"/></g>
          <g class="gizmo"><text x="1030" y="616" fill="#40d8d8">Y</text><text x="1040" y="615" fill="#d8d840">Z</text><text x="1062" y="622" fill="#d8d840">X</text></g>
        </svg>
      </div>
      <section class="message">
        <div class="msghead"><h2>Message Window</h2><button aria-label="Pin messages"><svg><use href="#pin"/></svg></button><button aria-label="Close messages"><svg><use href="#x"/></svg></button></div>
        <div class="log"><div class="scroll"><button aria-label="Scroll up"><svg class="r270"><use href="#triopen"/></svg></button><button aria-label="Scroll down"><svg class="r90"><use href="#triopen"/></svg></button></div></div>
        <label class="prompt"><span>&gt;&gt;</span><input type="text" aria-label="Command"></label>
        <div class="msgtabs">
          <button class="btn" aria-label="First"><svg class="flip"><use href="#triend"/></svg></button><button class="btn" aria-label="Previous"><svg class="flip"><use href="#tri"/></svg></button><button class="btn" aria-label="Next"><svg><use href="#tri"/></svg></button><button class="btn" aria-label="Last"><svg><use href="#triend"/></svg></button>
          <button class="mtab on">Command Message</button><button class="mtab">Analysis Message</button><svg class="slant"><path d="m1 12 5-12"/></svg>
          <div class="hscroll"><button class="btn dark" aria-label="Scroll left"><svg class="flip"><use href="#tri"/></svg></button><i class="btn thumb"></i><button class="btn dark last" aria-label="Scroll right"><svg><use href="#tri"/></svg></button></div>
        </div>
      </section>
    </section>

    <aside class="side">
      <div class="sidebar">
        <i class="hgrip first"></i>
        <button class="t" aria-label="Zoom fit"><svg class="ic"><use href="#zfit"/></svg></button>
        <button class="t" aria-label="Zoom window"><svg class="ic"><use href="#zwin"/></svg></button>
        <button class="t" aria-label="Zoom in"><svg class="ic"><use href="#zin"/></svg></button>
        <button class="t" aria-label="Zoom out"><svg class="ic"><use href="#zout"/></svg></button>
        <button class="t" aria-label="Auto fit"><svg class="ic"><use href="#zfit"/></svg></button>
        <i class="hsep"></i>
        <button class="t" aria-label="Pan left"><svg class="ic"><use href="#arrow"/></svg></button>
        <button class="t" aria-label="Pan right"><svg class="ic r180"><use href="#arrow"/></svg></button>
        <button class="t" aria-label="Pan up"><svg class="ic r90"><use href="#arrow"/></svg></button>
        <button class="t" aria-label="Pan down"><svg class="ic r270"><use href="#arrow"/></svg></button>
        <i class="hgrip"></i>
        <button class="t" aria-label="Render"><svg class="ic"><use href="#brush"/></svg></button>
        <button class="t" aria-label="Perspective"><svg class="ic"><use href="#perp"/></svg></button>
        <i class="hsep"></i>
        <button class="t" aria-label="Iso view"><svg class="ic"><use href="#gcube"/></svg></button>
        <button class="t" aria-label="Top view"><svg class="ic"><use href="#gcube2"/></svg></button>
        <button class="t" aria-label="Left view"><svg class="ic"><use href="#gcube3"/></svg></button>
        <button class="t" aria-label="Front view"><svg class="ic"><use href="#gcube"/></svg></button>
        <button class="t" aria-label="Angle view"><svg class="ic"><use href="#axes"/></svg></button>
        <i class="hsep"></i>
        <button class="t" aria-label="Rotate left"><svg class="ic"><use href="#rot1"/></svg></button>
        <button class="t" aria-label="Rotate up"><svg class="ic"><use href="#rot2"/></svg></button>
        <button class="t" aria-label="Rotate right"><svg class="ic"><use href="#rot3"/></svg></button>
        <button class="t" aria-label="Rotate down"><svg class="ic r180"><use href="#rot3"/></svg></button>
        <i class="hsep"></i>
        <button class="t" aria-label="Capture"><svg class="ic"><use href="#cam"/></svg></button>
        <button class="t" aria-label="Previous view"><svg class="ic"><use href="#cam2"/></svg></button>
        <i class="hgrip"></i>
        <button class="t" aria-label="Dynamic zoom"><svg class="ic"><use href="#mag"/></svg></button>
        <button class="t" aria-label="Dynamic pan"><svg class="ic"><use href="#pan"/></svg></button>
        <button class="t" aria-label="Dynamic rotate"><svg class="ic"><use href="#orbit"/></svg></button>
      </div>
    </aside>
  </main>

  <footer class="status">
    <span class="help">For Help, press F1</span><span class="cell">Node-7</span><span class="cell u">U: 0, 8, 0</span><span class="cell g">G: 0, 8, 0</span>
    <div class="controls">
      <span class="combo"><select aria-label="Force unit"><option>kN</option></select></span>
      <span class="combo"><select aria-label="Length unit"><option>m</option></select></span>
      <div class="steps"><button class="btn" aria-label="Fast query"><svg><use href="#mover"/></svg></button><button class="btn" aria-label="Grid"><svg><use href="#perp"/></svg></button><button class="btn" aria-label="Run"><svg><use href="#tri"/></svg></button></div>
      <span class="combo non"><select aria-label="Filter"><option>non</option></select></span>
      <button class="btn tip" aria-label="Selection filter">?</button>
      <button class="btn cyan" aria-label="Colour"></button>
      <button class="btn spin" aria-label="Set step"><svg><path d="M1 5h7v1H1zM3 3l2-2 1 2zM3 8h3L5 10z"/></svg></button>
      <span>/</span>
      <span class="num"><input type="text" value="2" aria-label="Count"><button class="btn" aria-label="Step count"><svg><path d="M1 5h7v1H1zM3 3l2-2 1 2zM3 8h3L5 10z"/></svg></button></span>
    </div>
  </footer>
</div>
</body>
</html>
```

FILE: styles.css
```css
* { box-sizing: border-box; }
body { margin: 0; padding: 0 190px; background: #000; color: #1a1a1a; font: 9px/12px "Liberation Sans", Arial, sans-serif; }
.sprite { position: absolute; width: 0; height: 0; }
button, input, select { font: inherit; color: inherit; margin: 0; padding: 0; border: 0; background: none; border-radius: 0; min-width: 0; }
h1, h2 { margin: 0; font: inherit; }
i { font-style: normal; }
svg { display: block; width: 8px; height: 8px; flex: none; overflow: visible; }
.ic { width: 13px; height: 13px; }
.flip, .r180 { transform: rotate(180deg); }
.r90 { transform: rotate(90deg); }
.r270 { transform: rotate(270deg); }

.app { min-height: 100vh; display: grid; grid-template-rows: 18px 17px 37px 20px 1fr 14px; background: #6b9ae0; border-bottom: 3px solid #0a34b4; }

.title { display: flex; align-items: center; gap: 4px; padding: 0 2px 0 0; background: linear-gradient(#1030d8, #0000cc 25%, #0008d8 70%, #0028f0); color: #fff; }
.title h1 { flex: 1; font: bold 10px/16px "DejaVu Sans Condensed", "Liberation Sans", sans-serif; white-space: nowrap; }
.title .ic { width: 12px; height: 12px; }
.winbtns { display: flex; gap: 1px; }
.winbtns button { width: 15px; height: 15px; display: grid; place-items: center; border: 1px solid #b8ccff; border-radius: 2px; background: linear-gradient(135deg, #5c88f0, #1440c8); }
.winbtns .ic { width: 10px; height: 10px; }
.winbtns .close { background: linear-gradient(135deg, #f08058, #d02808); }

.menu { display: flex; align-items: center; gap: 9px; padding: 0 2px 0 1px; font-family: Lato, sans-serif; color: #10204c; }
.menu > .grip + svg { margin: 0 -6px 0 -9px; }
.grip { flex: none; width: 3px; margin: 2px; align-self: stretch; background: repeating-linear-gradient(#1c3878 0 2px, transparent 2px 4px) 0 0 / 2px 100% no-repeat; }
.mdi { margin-left: auto; display: flex; gap: 3px; padding-top: 5px; }

.ribbons { display: flex; gap: 3px; padding: 1px 0 0; }
.ribbon { display: grid; grid-template-columns: 7px 1fr; grid-template-rows: 15px 1fr; border-top: 1px solid #b8d8f8; border-bottom: 2px solid #98e0f8; border-right: 2px solid #98e0f8; background: linear-gradient(#6f9ce2, #8fb4ec 30%, #c4d8f6 55%, #7ea6e6 90%); }
.ribbon .grip { grid-row: 1 / 3; }
.ribbon-a { width: 226px; }
.ribbon-b { width: 465px; }
.rtabs { display: flex; font-family: Lato, sans-serif; color: #35548c; }
.rtabs button { flex: none; padding: 0 3px; border-right: 1px solid #5f88cc; line-height: 11px; margin: 2px 0; white-space: nowrap; }
.rtabs .on { margin: 1px 0 0; padding: 0 4px; background: linear-gradient(#b8d8fa, #88b8f0); color: #10204c; border-right: 1px solid #1c4890; border-radius: 2px 2px 0 0; }
.ribbon-a .rtabs button { padding: 0 2px; }
.ribbon-a .rtabs .on { padding: 0 3px; }
.ribbon-b .rtabs { padding-left: 1px; }
.rtools { display: flex; align-items: center; }
.rtools .t { width: 15px; }
.ribbon-a .rtools { justify-content: space-between; padding-left: 2px; }
.ribbon-b .rtools { justify-content: space-between; width: 235px; }
.t { flex: none; width: 16px; height: 16px; display: flex; align-items: center; justify-content: center; }
.hot { background: #f08a28; border: 1px solid #703808; }

.toolbar { display: flex; align-items: center; width: 684px; margin: 1px 0 1px; background: linear-gradient(#e8f1fc, #c4d9f5 50%, #8fb2e8); border-bottom: 1px solid #24488c; }
.sep { flex: none; width: 1px; height: 12px; margin: 0 2px; background: #5878b0; }
.drop { width: 25px; justify-content: flex-start; }
.drop::after { content: ""; border: 2px solid transparent; border-top-color: #28406c; margin: 2px 0 0 3px; }
.wide { width: 20px; }

.combo { position: relative; display: block; height: 13px; border: 1px solid; border-color: #605c50 #e8e4d0 #e8e4d0 #605c50; background: #fff; min-width: 0; }
.combo select { appearance: none; display: block; width: 100%; height: 11px; line-height: 11px; padding-left: 2px; white-space: nowrap; }
.combo::after { content: ""; position: absolute; right: 0; top: 0; width: 10px; height: 11px; pointer-events: none; border: 1px solid; border-color: #f8f4e4 #504c44 #504c44 #f8f4e4; background: linear-gradient(#101010, #101010) 1px 3px / 5px 1px no-repeat, linear-gradient(#101010, #101010) 2px 4px / 3px 1px no-repeat, linear-gradient(#101010, #101010) 3px 5px / 1px 1px no-repeat, #dcd6c0; }
.combo.flat { flex: 1; border-color: #fff; }
.combo.flat::after { background-color: #a8c4f0; border-color: #c8dcf8; }

main { display: grid; grid-template-columns: 178px 1fr 19px; min-height: 0; }
.dock { display: flex; flex-direction: column; margin-right: 1px; border-right: 1px solid #2858b0; background: linear-gradient(90deg, #4880d8, #b8dcf8 2px, #6b9ae0 3px, #6b9ae0); font-family: Lato, sans-serif; }
.dockhead { display: flex; align-items: center; gap: 4px; height: 14px; padding: 0 4px 0 3px; background: linear-gradient(#ffe090, #f0b848 50%, #e0a030); }
.dockhead h2, .msghead h2 { flex: 1; }
.docktabs { height: 17px; padding: 2px 0 0 2px; background: linear-gradient(#a8c8f4, #4880e0); }
.docktabs button { height: 15px; padding: 0 5px; background: linear-gradient(#c8e8fc, #90c4f0); border-right: 2px solid #2858b0; }
.panel { flex: 1; margin: 0 4px 0 2px; padding: 9px 20px 0 4px; border-right: 2px solid #a0ccf8; border-left: 1px solid #a0ccf8; background: #dad5bf; font: 9px/13px "Liberation Sans", Arial, sans-serif; }
.row { display: flex; align-items: center; }
.top { gap: 4px; margin-right: -4px; }
.top .combo { flex: 1; }
.btn { display: grid; place-items: center; border: 1px solid; border-color: #f8f4e4 #605c50 #605c50 #f8f4e4; background: #dcd6c0; line-height: 8px; }
.blank { width: 13px; height: 13px; }
fieldset { margin: 0 0 5px 4px; padding: 4px 3px 0 3px; border: 1px solid #aaa592; min-width: 0; }
.top + fieldset { margin-top: 13px; padding-bottom: 4px; }
legend { padding: 0 2px; margin-left: 1px; line-height: 10px; }
.fields { display: grid; grid-template-columns: 32px 1fr; gap: 4px; margin: 0 4px 6px 3px; }
.span { grid-column: 1 / 3; }
.panel input[type=text] { height: 13px; width: 100%; padding-left: 2px; border: 1px solid; border-color: #605c50 #e8e4d0 #e8e4d0 #605c50; background: #fff; }
.panel input[type=text]:disabled { background: #dad5bf; }
.chk { display: flex; align-items: center; gap: 3px; height: 13px; white-space: nowrap; }
.chk input, .radios input[type=radio], .size input[type=radio] { appearance: none; flex: none; width: 8px; height: 8px; border: 1px solid; border-color: #504c44 #f0ecdc #f0ecdc #504c44; background: #fff; display: grid; place-items: center; }
.chk input:checked::before { content: ""; width: 5px; height: 3px; border: solid #181818; border-width: 0 0 1px 1px; transform: rotate(-45deg); }
input[type=radio] { border-radius: 50% !important; }
input[type=radio]:checked::before { content: ""; width: 3px; height: 3px; border-radius: 50%; background: #181818; }
.row label { display: flex; align-items: center; white-space: nowrap; }
.radios { margin: 2px 4px 4px 8px; gap: 5px; }
.radios label { gap: 4px; }
.radios input[type=text], .size input[type=text] { flex: 1; width: 0 !important; }
.size { margin: 0 8px 4px 1px; gap: 6px; }
.size label { gap: 4px; }
.props { display: grid; grid-template-columns: 46px 16px 1fr 13px; gap: 3px 2px; padding: 0 0 8px; white-space: nowrap; }
.props select, .props input[type=text] { padding-left: 1px; }
.two { grid-column: 1 / 3; }
.name { gap: 4px; margin: 1px 0 5px; }
.name .btn { flex: none; width: 13px; height: 13px; }
.name input { flex: 1; }
.foot { display: grid; gap: 2px; padding: 0 0 0 4px; }
.foot .chk { gap: 4px; }
.actions { display: flex; justify-content: flex-end; gap: 9px; margin: 4px 0 0; }
.actions .btn { display: block; width: 41px; height: 15px; line-height: 12px; }
.bottomtabs { display: flex; height: 20px; margin-left: 1px; border-top: 2px solid #3870d0; background: linear-gradient(#90b8f0, #4c84e0); color: #34589c; }
.bottomtabs button { padding: 0 5px; line-height: 16px; }
.bottomtabs .on { background: #a0d0f8; color: #10204c; border-right: 2px solid #1c4890; }

.center { display: flex; flex-direction: column; min-width: 0; }
.doctabs { display: flex; align-items: center; gap: 4px; height: 17px; padding: 0 5px 0 2px; background: linear-gradient(#7da6e4, #a4c2ee 60%, #c8dcf6); border-top: 1px solid #4070c0; }
.doctab { display: flex; align-items: center; gap: 3px; height: 16px; margin: 0 auto 0 0; padding: 0 8px 0 15px; background: #fcfcfc; clip-path: polygon(12px 0, 100% 0, 100% 100%, 0 100%); font: bold 9px/14px "DejaVu Sans Condensed", "Liberation Sans", sans-serif; }
.nav { color: #182848; }
.canvas { flex: 1; min-height: 0; margin: 0 1px 0 2px; border: solid #303030; border-width: 1px 2px 1px 1px; border-right-color: #fff; background: #f8f8f8; display: flex; overflow: hidden; }
.canvas > svg { flex: 1; width: 100%; height: auto; overflow: hidden; }
.axis { font: 9px "Liberation Sans", sans-serif; fill: #20206a; }
.gizmo { font: 8px "Liberation Sans", sans-serif; }

.message { margin: 5px 1px 0 0; height: 70px; display: grid; grid-template-rows: 15px 28px 13px 14px; }
.msghead { display: flex; align-items: center; gap: 4px; padding: 0 3px; background: linear-gradient(#a8c8f4, #78a8ec 50%, #4c84dc); font-family: Lato, sans-serif; color: #10204c; }
.log { display: flex; justify-content: flex-end; margin-left: 1px; border: solid #404850; border-width: 2px 2px 2px 1px; border-right-color: #e8eef8; background: #b8ccea; }
.scroll { display: grid; width: 11px; color: #8c8c84; }
.scroll button { display: grid; place-items: center; background: #e4e0d0; border: 1px solid #f4f0e4; }
.prompt { display: flex; padding: 0 1px; margin-right: 2px; border-top: 1px solid #e8eef8; background: #b8ccea; color: #1c48a0; }
.prompt input { flex: 1; }
.msgtabs { display: flex; align-items: center; margin-left: 1px; background: #dcd8c4; }
.msgtabs > .btn { width: 12px; height: 13px; color: #888474; margin-right: 1px; }
.mtab { height: 12px; padding: 0 8px; font-size: 8px; color: #303028; border-top: 1px solid #404040; white-space: nowrap; }
.mtab.on { padding: 0 7px; clip-path: polygon(0 0, 100% 0, calc(100% - 6px) 100%, 6px 100%); background: #fff; font-weight: bold; color: #000; border-top-color: #fff; }
.slant { width: 7px; height: 12px; fill: none; stroke: #303030; }
.hscroll { flex: 1; display: flex; margin-left: 34%; height: 12px; background: #ece8d8; border-left: 1px solid #605c50; }
.dark { width: 12px; color: #181818; }
.thumb { width: 12px; }
.last { margin-left: auto; }

.side { background: linear-gradient(90deg, #6b9ae0 70%, #3c70d0); }
.sidebar { display: flex; flex-direction: column; align-items: center; gap: 3px; width: 16px; margin-left: 2px; padding: 2px 0; background: linear-gradient(90deg, #e4eefc, #88ace6); border-right: 1px solid #24488c; }
.sidebar .t { height: 12px; width: 14px; }
.sidebar .ic { width: 12px; height: 12px; }
.hsep { width: 12px; height: 5px; background: linear-gradient(#5880c4, #5880c4) 0 2px / 100% 1px no-repeat; }
.hgrip { width: 12px; height: 8px; background: repeating-linear-gradient(90deg, #1c3878 0 2px, transparent 2px 3px) 0 3px / 100% 2px no-repeat; }
.hgrip.first { height: 2px; background-position: 0 0; }

.status { display: flex; align-items: center; padding-left: 3px; background: linear-gradient(#f0ecd8, #dcd6be 20%, #dcd6be); border-top: 1px solid #f8f8f0; white-space: nowrap; min-width: 0; }
.help { flex: 1; }
.cell { width: 73px; }
.cell.u, .cell.g { width: 113px; }
.controls { display: flex; align-items: center; gap: 3px; padding-right: 3px; }
.controls .combo { width: 33px; }
.controls .non { width: 32px; }
.steps { display: flex; gap: 1px; margin-left: 3px; color: #98927e; }
.steps .btn { width: 15px; height: 13px; }
.steps svg { opacity: .6; }
.tip { width: 14px; height: 12px; background: #98f4f4; color: #082828; font-weight: bold; }
.cyan { width: 13px; height: 12px; background: #00f0f0; }
.spin { width: 22px; height: 12px; justify-items: end; margin-left: -2px; }
.controls svg { width: 10px; height: 10px; }
.num { display: flex; height: 12px; background: #fff; border: 1px solid #605c50; }
.num input { width: 20px; text-align: center; }
```
